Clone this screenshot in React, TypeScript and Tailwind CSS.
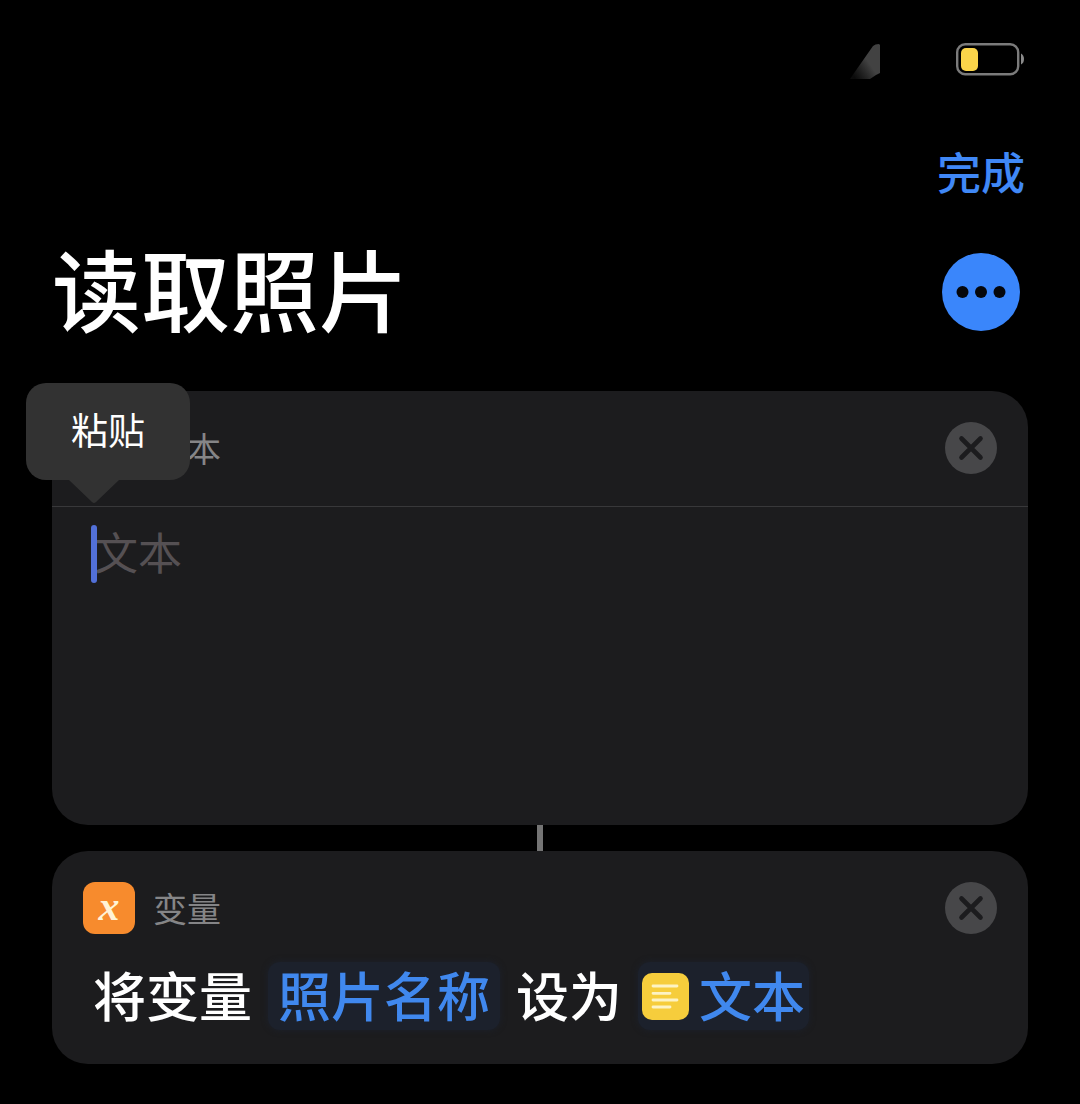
import type { ReactNode } from "react";

const SignalIcon = () => {
  return (
    <svg width="36" height="44" viewBox="0 0 36 44" aria-hidden="true">
      <defs>
        <linearGradient id="signal" x1="0.1" y1="0.9" x2="0.6" y2="0.5">
          <stop offset="0" stopColor="#383838" stopOpacity="0.2" />
          <stop offset="1" stopColor="#424242" />
        </linearGradient>
      </defs>
      <path d="M36 8V36L32 38L26 42H6Q10 36 15 29L29 9Q31 7 35 7Z" fill="url(#signal)" />
    </svg>
  );
};

const BatteryIcon = () => {
  return (
    <svg width="70" height="34" viewBox="0 0 70 34" aria-hidden="true">
      <rect x="2.2" y="2.2" width="61" height="30" rx="8" fill="none" stroke="#7b7b7b" strokeWidth="2.4" />
      <rect x="6" y="6" width="17" height="23" rx="5" fill="#fbd54a" />
      <path d="M66 11.500Q69 13 69 17Q69 21 66 22.500Z" fill="#8a8a8a" />
    </svg>
  );
};

const TextIcon = ({ className }: { className: string }) => {
  return (
    <svg className={className} viewBox="0 0 47 47" aria-hidden="true">
      <rect width="47" height="47" rx="10" fill="#f6cd3c" />
      <path
        d="M11 13H35M11 20.300H28M11 27H35M11 34H28"
        stroke="#fdf3c4"
        strokeWidth="2.8"
        strokeLinecap="round"
      />
    </svg>
  );
};

const VariableIcon = () => {
  return (
    <span className="flex size-[52px] items-center justify-center rounded-xl bg-[#f78b2d] pb-1 font-['Liberation_Serif',serif] text-[42px] leading-none font-bold text-[#fff3d6] italic">
      x
    </span>
  );
};

const CloseButton = () => {
  return (
    <button type="button" aria-label="删除" className="ml-auto size-[52px] rounded-full bg-[#474749]">
      <svg className="size-full" viewBox="0 0 52 52" fill="none" aria-hidden="true">
        <path d="M16.500 16.500L35.500 35.500M35.500 16.500L16.500 35.500" stroke="#1c1c1e" strokeWidth="4.6" strokeLinecap="round" />
      </svg>
    </button>
  );
};

const CardHeader = ({ icon, title }: { icon: ReactNode; title: string }) => {
  return (
    <div className="flex items-center gap-[18px] px-[31px] pt-[31px]">
      {icon}
      <h2 className="text-[34px] leading-[52px] font-normal text-[#858587]">{title}</h2>
      <CloseButton />
    </div>
  );
};

const PasteMenu = () => {
  return (
    <div className="absolute -top-2 -left-[26px]">
      <button
        type="button"
        className="block h-[97px] w-[164px] rounded-[20px] bg-[#323232] pb-1 text-[37px] leading-none font-normal text-white"
      >
        粘贴
      </button>
      <svg className="ml-[43px]" width="50" height="24" viewBox="0 0 50 24" aria-hidden="true">
        <path d="M0 0H50L27 22Q25 24 23 22Z" fill="#323232" />
      </svg>
    </div>
  );
};

export default function App() {
  return (
    <div className="min-h-screen bg-black px-[52px] pb-10 font-['Noto_Sans_CJK_SC',sans-serif] text-white">
      <div className="flex h-[118px] items-center justify-end gap-[75px] pr-[3px]">
        <SignalIcon />
        <BatteryIcon />
      </div>

      <nav className="flex h-[110px] items-center justify-end pr-[3px] pb-1">
        <button type="button" className="text-[44px] font-medium text-[#4088f6]">
          完成
        </button>
      </nav>

      <header className="flex h-32 items-center justify-between pr-2">
        <h1 className="pb-3 text-[89px] leading-none font-medium">读取照片</h1>
        <button type="button" aria-label="更多" className="size-[78px] rounded-full bg-[#3a86fb]">
          <svg className="size-full" viewBox="0 0 78 78" fill="#05070c" aria-hidden="true">
            <circle cx="20.500" cy="39" r="6" />
            <circle cx="39" cy="39" r="6" />
            <circle cx="57.500" cy="39" r="6" />
          </svg>
        </button>
      </header>

      <main className="mt-[35px] flex flex-col items-center">
        <section className="relative w-full rounded-[36px] bg-[#1c1c1e]">
          <CardHeader icon={<TextIcon className="size-[52px]" />} title="文本" />
          <div className="relative mt-8 border-t border-[#38383a]">
            <textarea
              aria-label="文本"
              placeholder="文本"
              className="block h-[318px] w-full resize-none bg-transparent px-[42px] pt-3 text-[44px] leading-[64px] font-normal outline-none placeholder:text-[#555053]"
            />
            <span className="absolute top-[18px] left-[39px] h-[58px] w-[6px] rounded-full bg-[#5270d8]" />
          </div>
          <PasteMenu />
        </section>

        <div className="h-[26px] w-[6px] bg-[#747474]" />

        <section className="w-full rounded-[36px] bg-[#1c1c1e] pb-[34px]">
          <CardHeader icon={<VariableIcon />} title="变量" />
          <div className="mt-7 flex items-center gap-4 px-[41px] text-[53px] leading-[64px] font-medium">
            <span className="pb-1">将变量</span>
            <button type="button" className="rounded-xl bg-[#1c212c] px-[10px] pb-1 text-[#4088ee] shadow-[0_0_6px_#1c212c]">
              照片名称
            </button>
            <span className="pb-1">设为</span>
            <button type="button" className="flex items-center gap-[10px] rounded-xl bg-[#1c212c] px-1 text-[#4088ee] shadow-[0_0_6px_#1c212c]">
              <TextIcon className="size-[47px]" />
              <span className="pb-1">文本</span>
            </button>
          </div>
        </section>
      </main>
    </div>
  );
}
